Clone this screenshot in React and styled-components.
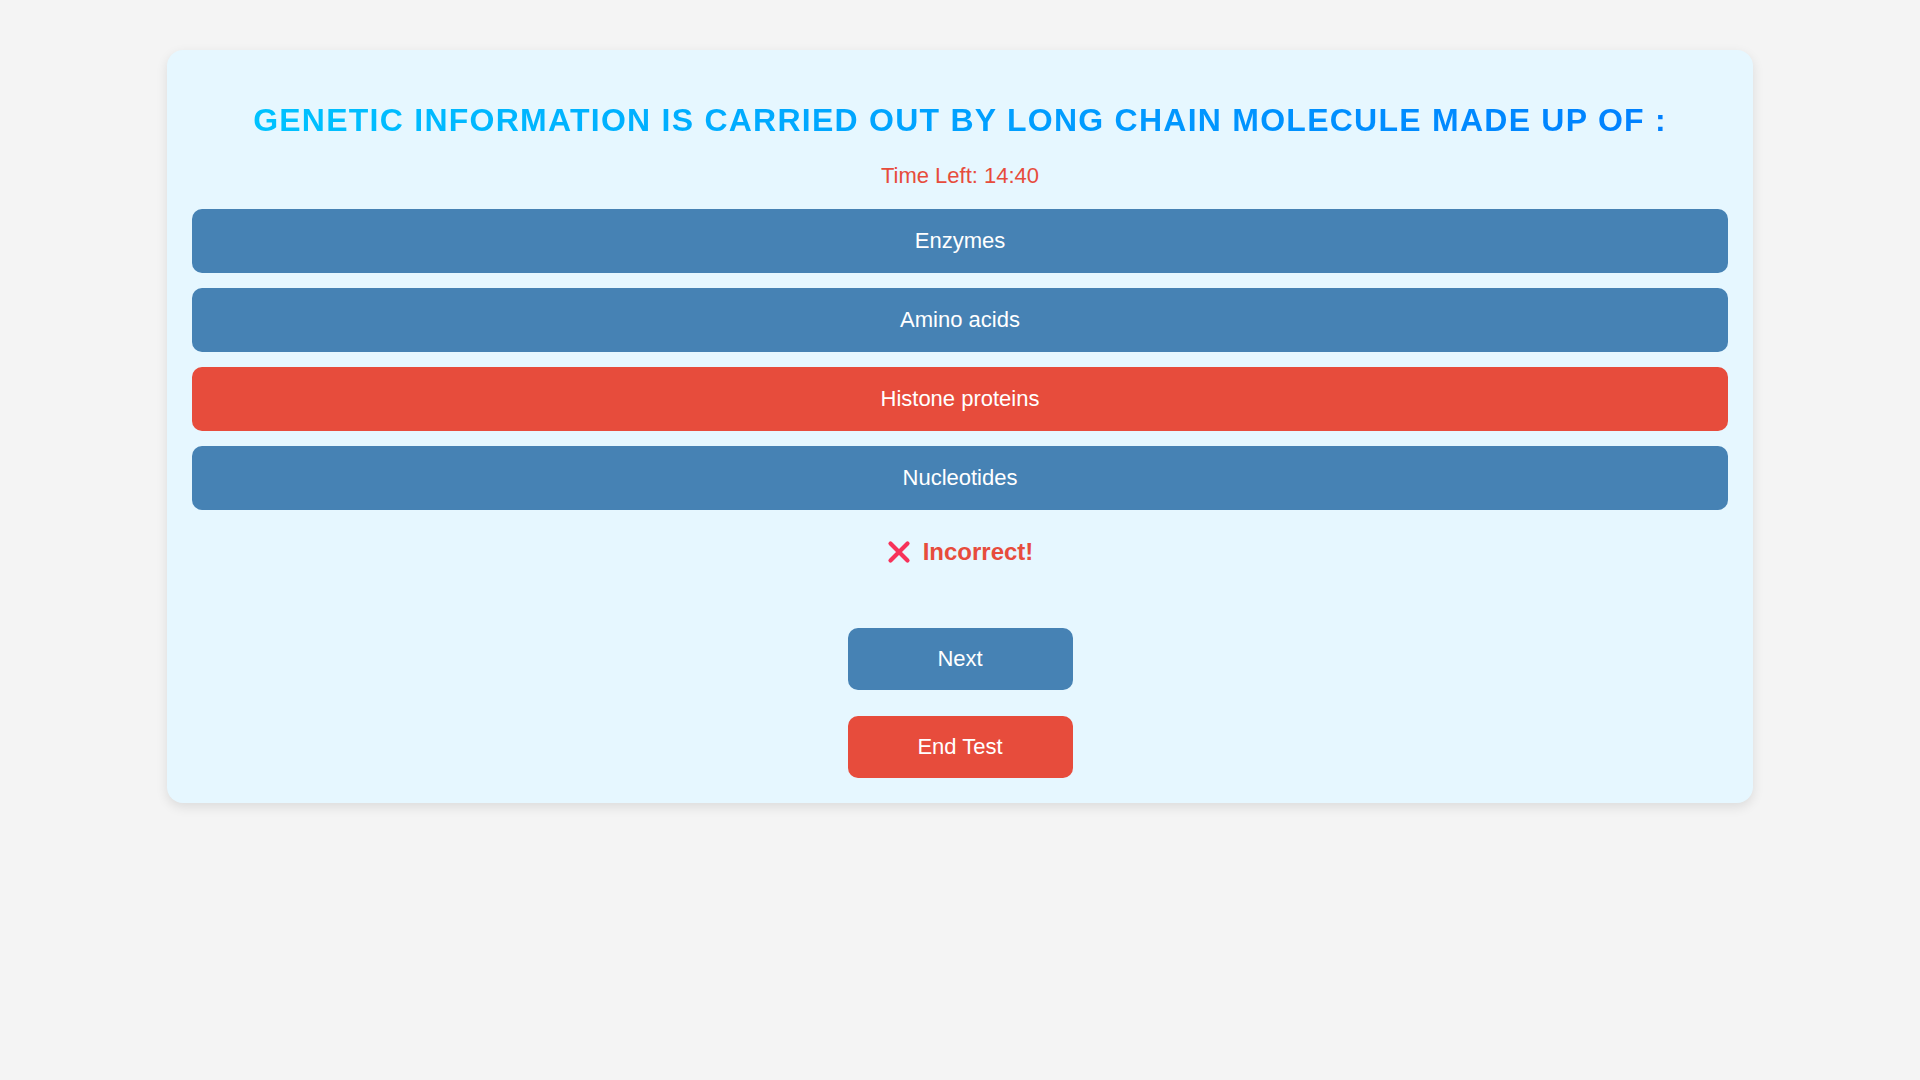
import React, { useState } from "react";
import styled, { createGlobalStyle } from "styled-components";

const GlobalStyle = createGlobalStyle`
  body {
    margin: 0;
    background-color: #f4f4f4;
    font-family: "Liberation Sans", Arial, sans-serif;
  }
`;

const PageContainer = styled.div`
  min-height: 100vh;
  padding-top: 50px;
  box-sizing: border-box;
`;

const QuizCard = styled.div`
  width: 1586px;
  margin: 0 auto;
  padding: 25px;
  box-sizing: border-box;
  background-color: #e6f7ff;
  border-radius: 16px;
  box-shadow: 0 4px 12px rgba(0, 0, 0, 0.1);
  display: flex;
  flex-direction: column;
  align-items: center;
`;

const QuestionText = styled.h1`
  margin: 27px 0 0 0;
  font-size: 32px;
  font-weight: 700;
  letter-spacing: 1.25px;
  text-transform: uppercase;
  text-align: center;
  background: linear-gradient(90deg, #00c2ff, #0080ff);
  -webkit-background-clip: text;
  background-clip: text;
  color: transparent;
`;

const Timer = styled.p`
  margin: 24px 0 20px 0;
  font-size: 22px;
  color: #e74c3c;
`;

const OptionList = styled.div`
  width: 100%;
  display: flex;
  flex-direction: column;
  gap: 15px;
`;

const OptionButton = styled.button`
  width: 100%;
  padding: 19px;
  border: none;
  border-radius: 10px;
  font-family: inherit;
  font-size: 22px;
  color: #fff;
  background-color: ${(p) => (p.$wrong ? "#e74c3c" : "#4682b4")};
  cursor: pointer;
`;

const Feedback = styled.div`
  margin: 28px 0 0 0;
  display: flex;
  align-items: center;
  gap: 12px;
  font-size: 24px;
  font-weight: 700;
  color: #e74c3c;
`;

const ActionButton = styled.button`
  width: 225px;
  padding: 19px;
  border: none;
  border-radius: 10px;
  font-family: inherit;
  font-size: 22px;
  line-height: 24px;
  color: #fff;
  background-color: ${(p) => (p.$danger ? "#e74c3c" : "#4682b4")};
  margin-top: ${(p) => p.$top}px;
  cursor: pointer;
`;

const CrossIcon = () => (
  <svg width="24" height="24" viewBox="0 0 24 24">
    <path
      d="M3.5 3.5 L20.5 20.5 M20.5 3.5 L3.5 20.5"
      stroke="#f7325a"
      strokeWidth="4.2"
      strokeLinecap="round"
    />
  </svg>
);

const options = ["Enzymes", "Amino acids", "Histone proteins", "Nucleotides"];

const App = () => {
  const [selected] = useState("Histone proteins");

  return (
    <PageContainer>
      <GlobalStyle />
      <QuizCard>
        <QuestionText>
          Genetic information is carried out by long chain molecule made up of :
        </QuestionText>
        <Timer>Time Left: 14:40</Timer>
        <OptionList>
          {options.map((opt) => (
            <OptionButton key={opt} $wrong={opt === selected}>
              {opt}
            </OptionButton>
          ))}
        </OptionList>
        <Feedback>
          <CrossIcon />
          Incorrect!
        </Feedback>
        <ActionButton $top={62}>Next</ActionButton>
        <ActionButton $danger $top={26}>
          End Test
        </ActionButton>
      </QuizCard>
    </PageContainer>
  );
};

export default App;
